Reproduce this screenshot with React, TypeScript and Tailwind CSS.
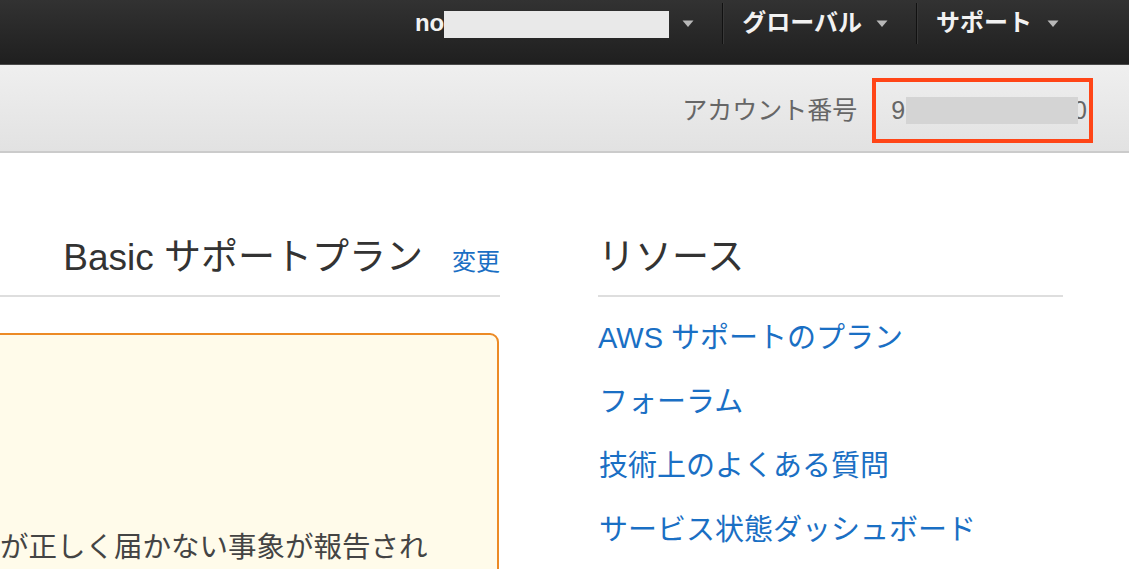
import React from "react";

const FONT = { fontFamily: '"Liberation Sans", "Noto Sans CJK JP", sans-serif' };

function Caret() {
  return (
    <svg width="12" height="8" viewBox="0 0 12 8" className="shrink-0">
      <path d="M0.5 0.5 L11.5 0.5 L6 7 Z" fill="#b8b8b8" />
    </svg>
  );
}

function Sep() {
  return (
    <div className="flex h-[41px] self-start mt-[3px]">
      <div className="w-px h-full bg-[#111]" />
      <div className="w-px h-full bg-[#383838]" />
    </div>
  );
}

export default function App() {
  return (
    <div className="w-[1129px] h-[569px] overflow-hidden bg-white" style={FONT}>
      {/* top nav */}
      <div className="h-[65px] bg-linear-to-b from-[#323232] to-[#1f1f1f] border-b border-[#4a4a4a]">
        <div className="flex justify-end items-start pr-[70px] h-[46px]">
          <div className="flex items-center h-[46px] pr-[28px]">
            <span className="text-[24px] font-semibold text-[#f2f2f2] leading-none">no</span>
            <span className="inline-block w-[225px] h-[27px] bg-[#e9e9e9] mt-[3px]" />
            <span className="ml-[13px] mt-[2px]"><Caret /></span>
          </div>
          <Sep />
          <div className="flex items-center h-[46px] pl-[18px] pr-[28px]">
            <span className="text-[24px] font-semibold text-[#f2f2f2] leading-none whitespace-nowrap">グローバル</span>
            <span className="ml-[14px] mt-[2px]"><Caret /></span>
          </div>
          <Sep />
          <div className="flex items-center h-[46px] pl-[18px]">
            <span className="text-[24px] font-semibold text-[#f2f2f2] leading-none whitespace-nowrap">サポート</span>
            <span className="ml-[15px] mt-[2px]"><Caret /></span>
          </div>
        </div>
      </div>

      {/* account bar */}
      <div className="relative h-[88px] bg-linear-to-b from-[#efefef] to-[#e2e2e2] border-b-2 border-[#cbcbcb] flex justify-end items-center pr-[42px] pt-[4px]">
        <span className="text-[25px] text-[#666] leading-none whitespace-nowrap">アカウント番号</span>
        <span className="text-[25px] text-[#666] leading-none ml-[34px]">9</span>
        <span className="relative z-10 inline-block w-[172px] h-[27px] bg-[#d4d4d4] ml-[1px]" />
        <span className="text-[25px] text-[#666] leading-none -ml-[5px]">0</span>
        <div className="absolute left-[872px] top-[13px] w-[221px] h-[65px] border-[4px] border-[#ff4517]" />
      </div>

      {/* main */}
      <div className="flex">
        <div className="-ml-[100px] w-[600px] shrink-0">
          <div className="mt-[83px] h-[61px] flex justify-end items-baseline border-b-2 border-[#dedede]">
            <h2 className="text-[37px] text-[#333] leading-[44px] whitespace-nowrap">Basic サポートプラン</h2>
            <a className="text-[24px] text-[#1a6fc4] ml-[29px] leading-[44px] whitespace-nowrap">変更</a>
          </div>
          <div className="mt-[36px] w-[599px] h-[300px] bg-[#fffbea] border-2 border-[#ec8a25] rounded-[9px] pt-[192px] pl-[98px]">
            <p className="text-[28.5px] text-[#444] leading-[40px] whitespace-nowrap">が正しく届かない事象が報告され</p>
          </div>
        </div>
        <div className="ml-[98px] w-[465px] shrink-0">
          <div className="mt-[83px] h-[61px] border-b-2 border-[#dedede]">
            <h2 className="text-[37px] text-[#333] leading-[44px] whitespace-nowrap">リソース</h2>
          </div>
          <ul className="mt-[9px] text-[29px] text-[#1a6fc4]">
            <li className="leading-[64px] whitespace-nowrap">AWS サポートのプラン</li>
            <li className="leading-[64px] whitespace-nowrap pl-[1px]">フォーラム</li>
            <li className="leading-[64px] whitespace-nowrap pl-[1px]">技術上のよくある質問</li>
            <li className="leading-[64px] whitespace-nowrap pl-[1px]">サービス状態ダッシュボード</li>
          </ul>
        </div>
      </div>
    </div>
  );
}
